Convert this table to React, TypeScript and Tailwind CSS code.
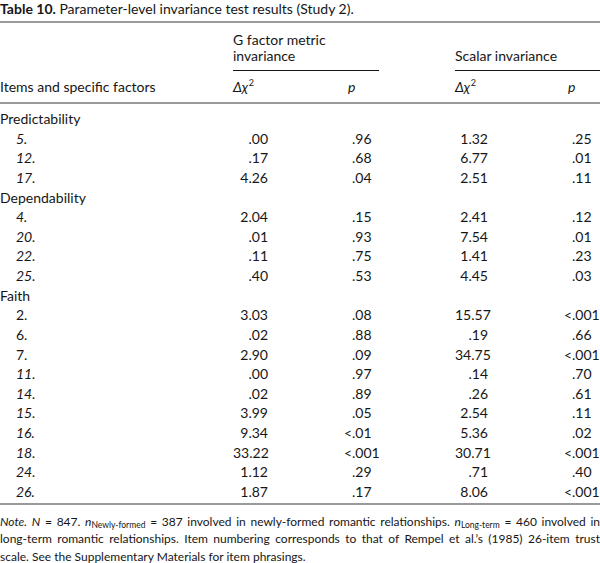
import React from 'react';

type Row =
  | { kind: 'group'; label: string }
  | { kind: 'item'; label: string; upright?: boolean; d1: string; p1: string; d2: string; p2: string };

const rows: Row[] = [
  { kind: 'group', label: 'Predictability' },
  { kind: 'item', label: '5.', d1: '.00', p1: '.96', d2: '1.32', p2: '.25' },
  { kind: 'item', label: '12.', d1: '.17', p1: '.68', d2: '6.77', p2: '.01' },
  { kind: 'item', label: '17.', d1: '4.26', p1: '.04', d2: '2.51', p2: '.11' },
  { kind: 'group', label: 'Dependability' },
  { kind: 'item', label: '4.', d1: '2.04', p1: '.15', d2: '2.41', p2: '.12' },
  { kind: 'item', label: '20.', d1: '.01', p1: '.93', d2: '7.54', p2: '.01' },
  { kind: 'item', label: '22.', d1: '.11', p1: '.75', d2: '1.41', p2: '.23' },
  { kind: 'item', label: '25.', d1: '.40', p1: '.53', d2: '4.45', p2: '.03' },
  { kind: 'group', label: 'Faith' },
  { kind: 'item', label: '2.', upright: true, d1: '3.03', p1: '.08', d2: '15.57', p2: '<.001' },
  { kind: 'item', label: '6.', upright: true, d1: '.02', p1: '.88', d2: '.19', p2: '.66' },
  { kind: 'item', label: '7.', upright: true, d1: '2.90', p1: '.09', d2: '34.75', p2: '<.001' },
  { kind: 'item', label: '11.', d1: '.00', p1: '.97', d2: '.14', p2: '.70' },
  { kind: 'item', label: '14.', d1: '.02', p1: '.89', d2: '.26', p2: '.61' },
  { kind: 'item', label: '15.', d1: '3.99', p1: '.05', d2: '2.54', p2: '.11' },
  { kind: 'item', label: '16.', d1: '9.34', p1: '<.01', d2: '5.36', p2: '.02' },
  { kind: 'item', label: '18.', d1: '33.22', p1: '<.001', d2: '30.71', p2: '<.001' },
  { kind: 'item', label: '24.', d1: '1.12', p1: '.29', d2: '.71', p2: '.40' },
  { kind: 'item', label: '26.', d1: '1.87', p1: '.17', d2: '8.06', p2: '<.001' },
];

// p values line up on the decimal point; a leading "<" hangs to the left
const PValue = ({ value }: { value: string }) => {
  const lt = value.startsWith('<');
  return (
    <div className="flex pl-[72px]">
      <span className="w-[12px] text-right">{lt ? '<' : ''}</span>
      <span>{lt ? value.slice(1) : value}</span>
    </div>
  );
};

const DeltaChi = () => (
  <span className="whitespace-nowrap">
    <i>Δχ</i>
    <span className="text-[9px] leading-none relative -top-[6px] ml-[1px]">2</span>
  </span>
);

export default function App() {
  return (
    <div className="w-[600px] bg-white text-[#161616] font-['Lato','Open_Sans',sans-serif] text-[14px]">
      <div className="h-[18px] leading-[18px] text-[14px] whitespace-nowrap">
        <span className="font-bold">Table 10.</span> Parameter-level invariance test results (Study 2).
      </div>

      <div className="mt-[3px] h-[2px] bg-[#9a9a9a]" />

      {/* column group headers */}
      <div className="flex items-end pt-[9px] leading-[16px]">
        <div className="w-[233px]" />
        <div className="w-[146px] border-b border-[#161616] pb-[6px]">
          G factor metric
          <br />
          invariance
        </div>
        <div className="w-[76px]" />
        <div className="w-[145px] border-b border-[#161616] pb-[6px]">Scalar invariance</div>
      </div>

      <div className="flex h-[31px] pt-[8px] leading-[16px]">
        <div className="w-[233px]">Items and specific factors</div>
        <div className="w-[35px]">
          <DeltaChi />
        </div>
        <div className="w-[187px] pl-[80px]">
          <i>p</i>
        </div>
        <div className="w-[33px]">
          <DeltaChi />
        </div>
        <div className="flex-1 pl-[80px]">
          <i>p</i>
        </div>
      </div>

      <div className="h-[2px] bg-[#9a9a9a]" />

      <div className="pt-[5px] pb-[1px]">
        {rows.map((r, i) =>
          r.kind === 'group' ? (
            <div key={i} className="h-[19.63px] leading-[19.63px]">
              {r.label}
            </div>
          ) : (
            <div key={i} className="flex h-[19.63px] leading-[19.63px]">
              <div className={`w-[233px] pl-[16px] ${r.upright ? '' : 'italic'}`}>{r.label}</div>
              <div className="w-[35px] text-right whitespace-nowrap">{r.d1}</div>
              <div className="w-[187px]">
                <PValue value={r.p1} />
              </div>
              <div className="w-[33px] text-right whitespace-nowrap">{r.d2}</div>
              <div className="flex-1">
                <PValue value={r.p2} />
              </div>
            </div>
          )
        )}
      </div>

      <div className="h-[2px] bg-[#9a9a9a]" />

      <div className="mt-[8px] text-[12px] leading-[17.5px]">
        <div className="h-[17.5px] text-justify [text-align-last:justify] whitespace-nowrap">
          <i>Note.</i> <i>N</i> = 847. <i>n</i>
          <span className="text-[8.5px] leading-none relative top-[2px]">Newly-formed</span> = 387 involved in
          newly-formed romantic relationships. <i>n</i>
          <span className="text-[8.5px] leading-none relative top-[2px]">Long-term</span> = 460 involved in
        </div>
        <div className="h-[17.5px] text-justify [text-align-last:justify] whitespace-nowrap">
          long-term romantic relationships. Item numbering corresponds to that of Rempel et al.’s (1985) 26-item trust
        </div>
        <div className="h-[17.5px]">scale. See the Supplementary Materials for item phrasings.</div>
      </div>
    </div>
  );
}
